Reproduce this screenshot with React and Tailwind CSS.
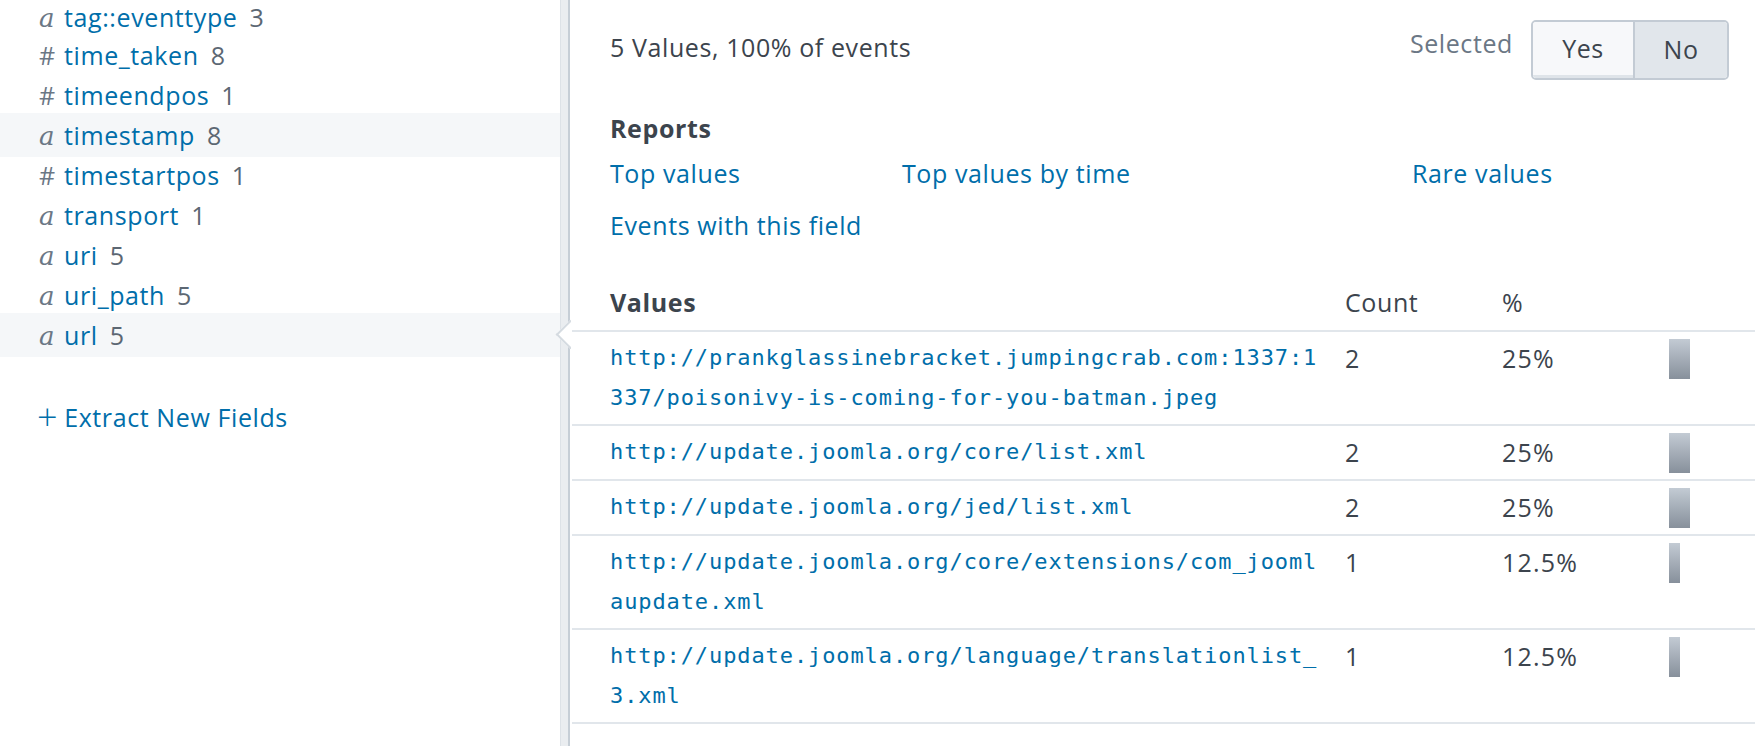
import React from "react";

const fields = [
  { t: "a", name: "tag::eventtype", n: "3", first: true },
  { t: "#", name: "time_taken", n: "8" },
  { t: "#", name: "timeendpos", n: "1" },
  { t: "a", name: "timestamp", n: "8", hl: true },
  { t: "#", name: "timestartpos", n: "1" },
  { t: "a", name: "transport", n: "1" },
  { t: "a", name: "uri", n: "5" },
  { t: "a", name: "uri_path", n: "5" },
  { t: "a", name: "url", n: "5", hl: true },
];

const rows = [
  { v: "http://prankglassinebracket.jumpingcrab.com:1337:1337/poisonivy-is-coming-for-you-batman.jpeg", c: "2", p: "25%", w: 21 },
  { v: "http://update.joomla.org/core/list.xml", c: "2", p: "25%", w: 21 },
  { v: "http://update.joomla.org/jed/list.xml", c: "2", p: "25%", w: 21 },
  { v: "http://update.joomla.org/core/extensions/com_joomlaupdate.xml", c: "1", p: "12.5%", w: 11 },
  { v: "http://update.joomla.org/language/translationlist_3.xml", c: "1", p: "12.5%", w: 11 },
];

const sans = { fontFamily: "'Open Sans', 'Noto Sans', sans-serif" };

export default function App() {
  return (
    <div
      className="flex w-[1755px] h-[746px] bg-white overflow-hidden text-[25px] tracking-[0.6px] text-[#3c444d]"
      style={sans}
    >
      {/* Sidebar */}
      <aside className="w-[560px] shrink-0 flex flex-col -mt-[1px]">
        {fields.map((f) =>
          <div
            key={f.name}
            className={
              f.hl
                ? "flex items-center h-[44px] -my-[2px] pl-[39px] bg-[#f5f7f9] leading-[30px]"
                : f.first
                ? "flex items-center h-[36px] pl-[39px] leading-[30px]"
                : "flex items-center h-[40px] pl-[39px] leading-[30px]"
            }
          >
            <span className="w-[25px] shrink-0 text-[#6b7785]">
              {f.t === "a" ? (
                <span className="italic text-[26px]" style={{ fontFamily: "'DejaVu Serif', 'Liberation Serif', serif" }}>a</span>
              ) : (
                <span>#</span>
              )}
            </span>
            <span className="text-[#006eaa]">{f.name}</span>
            <span className="ml-[12px] text-[#5c6773]">{f.n}</span>
          </div>
        )}
        <div className="mt-[47px] pl-[37px] flex items-center text-[#006eaa] leading-[30px]">
          <span className="text-[36px] mr-[6px] leading-[30px] font-light">+</span>
          <span>Extract New Fields</span>
        </div>
      </aside>

      {/* Divider */}
      <div className="relative w-[10px] shrink-0 bg-[#eaedf0] border-l border-[#dde2e7] border-r-2 border-r-[#c6ced6]">
        <div className="absolute left-[-7px] top-[318px] w-[17px] h-[34px] overflow-hidden">
          <div className="absolute left-[6px] top-[6px] w-[21px] h-[21px] bg-white border-l-2 border-b-2 border-[#d5dbe1] rotate-45" />
        </div>
      </div>

      {/* Main */}
      <main className="flex-1 pl-[2px] flex flex-col">
        <div className="flex items-start pl-[38px] pr-[26px] pt-[20px]">
          <div className="mt-[12px] leading-[30px]">5 Values, 100% of events</div>
          <div className="flex-1" />
          <div className="mt-[8px] leading-[30px] text-[#6b7785] mr-[18px]">Selected</div>
          <div className="flex h-[60px] rounded-[5px] border-2 border-[#c3cbd4] overflow-hidden">
            <div className="w-[100px] flex items-center justify-center bg-[#f7f8fa] border-b-[3px] border-[#dfe4e9] text-[#3c444d]">Yes</div>
            <div className="w-[2px] bg-[#c3cbd4]" />
            <div className="w-[92px] flex items-center justify-center bg-[#e1e6eb] text-[#3c444d]">No</div>
          </div>
        </div>

        <div className="pl-[38px] mt-[33px] leading-[30px] font-bold">Reports</div>
        <div className="pl-[38px] mt-[15px] grid grid-cols-[292px_510px_1fr] gap-y-[22px] leading-[30px] text-[#006eaa]">
          <div>Top values</div>
          <div>Top values by time</div>
          <div>Rare values</div>
          <div>Events with this field</div>
        </div>

        <div className="mt-[47px] flex leading-[30px] pb-[13px] border-b-2 border-[#e1e6eb]">
          <div className="w-[773px] pl-[38px] font-bold">Values</div>
          <div className="w-[157px]">Count</div>
          <div className="w-[167px]">%</div>
        </div>

        {rows.map((r) => (
          <div key={r.v} className="flex items-start pt-[6px] pb-[6px] border-b-2 border-[#e1e6eb]">
            <div className="w-[773px] pl-[38px] pr-[21px] shrink-0">
              <div
                className="text-[#006eaa] text-[22px] leading-[40px] tracking-[0.9px] break-all"
                style={{ fontFamily: "'DejaVu Sans Mono', 'Liberation Mono', monospace" }}
              >
                {r.v}
              </div>
            </div>
            <div className="w-[157px] shrink-0 leading-[40px]">{r.c}</div>
            <div className="w-[167px] shrink-0 leading-[40px] tabular-nums tracking-[1.2px]">{r.p}</div>
            <div
              className="mt-[1px] h-[40px] bg-gradient-to-b from-[#c3cbd4] to-[#87909b]"
              style={{ width: r.w }}
            />
          </div>
        ))}
      </main>
    </div>
  );
}
